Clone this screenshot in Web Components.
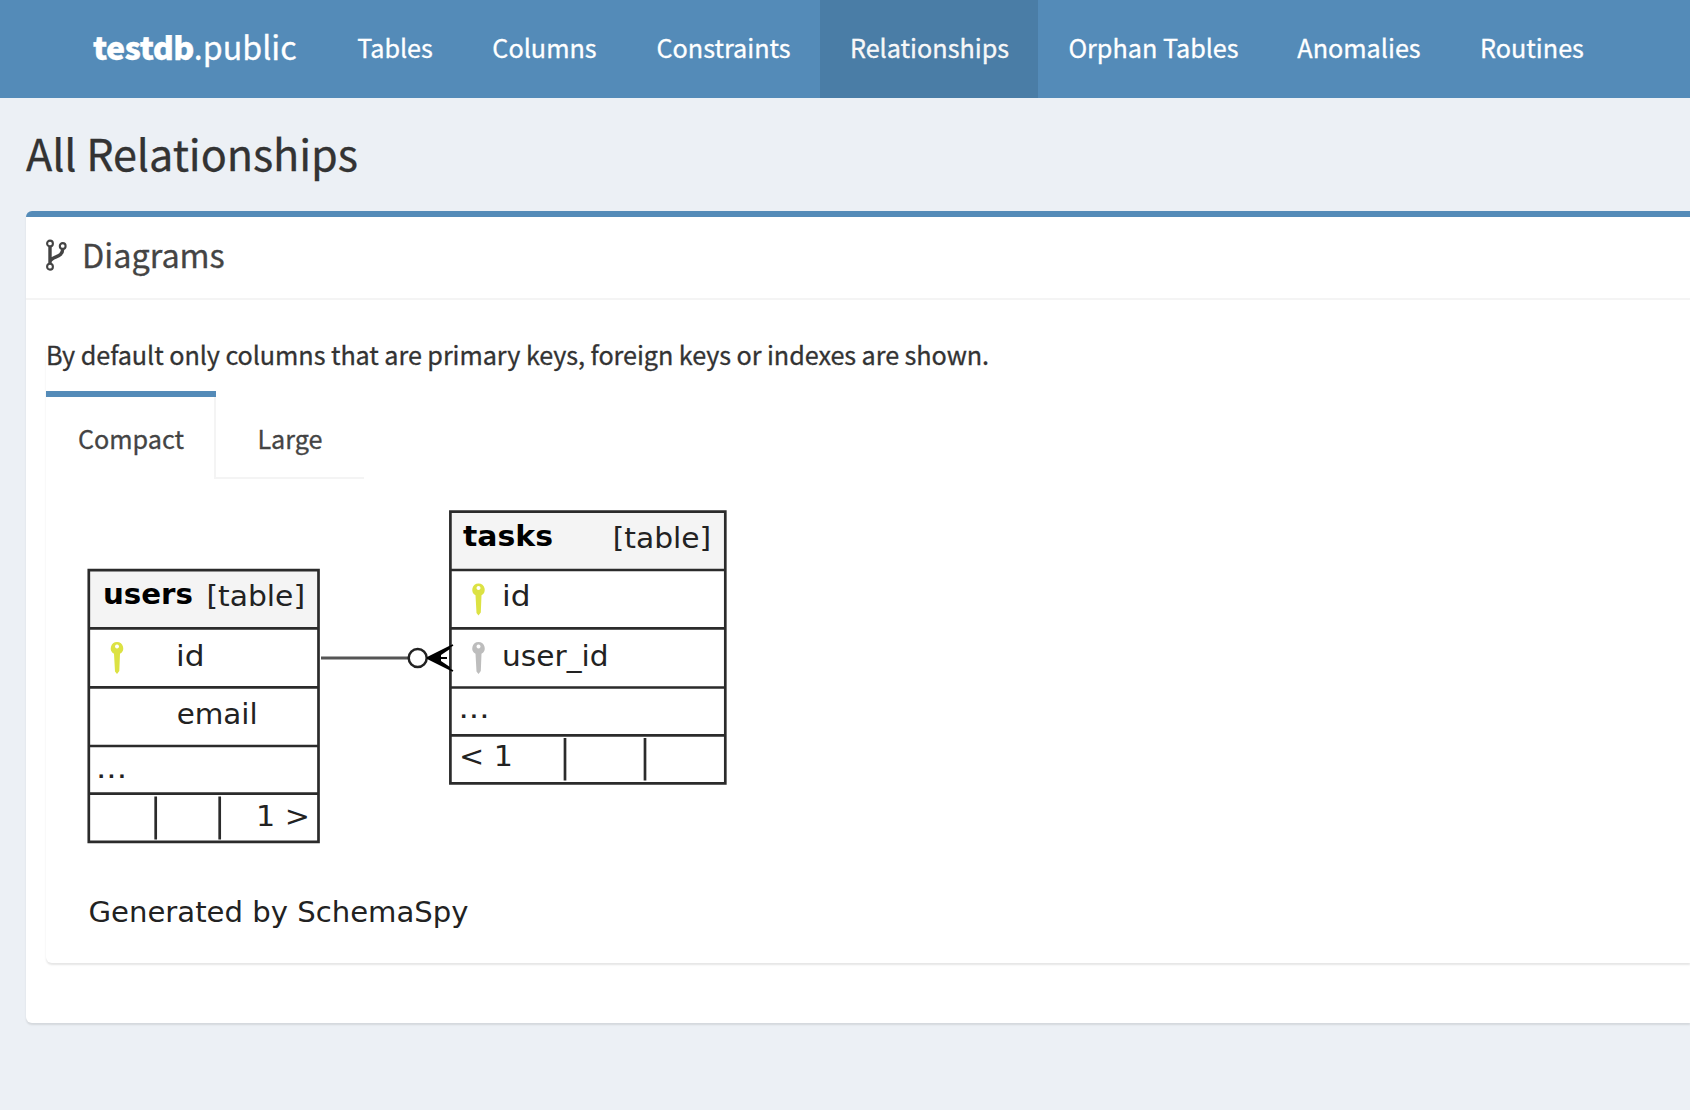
<!DOCTYPE html>
<html lang="en"><head><meta charset="utf-8"><title>testdb.public - All Relationships</title>
<style>
html,body{margin:0;height:100%;overflow:hidden}
body{background:#ecf0f5;color:#333;font-family:"Noto Sans CJK SC","Open Sans",sans-serif;-webkit-text-stroke:.3px currentColor}
</style></head><body>
<spy-app></spy-app>
<script>
const define=(name,html)=>customElements.define(name,class extends HTMLElement{
  constructor(){super();const t=document.createElement('template');t.innerHTML=html;
    this.attachShadow({mode:'open'}).appendChild(t.content.cloneNode(true));}
});

define('nav-item',`<style>
:host{display:flex;align-items:center;justify-content:center;height:98px;box-sizing:border-box;padding:0 0 4px 1px;font-size:25.2px;line-height:36px;white-space:nowrap;color:#fff;flex:none;-webkit-text-stroke:.3px #fff}
:host([active]){background:#4a7da6;color:#f6f6f6}
</style><slot></slot>`);

define('spy-navbar',`<style>
:host{display:flex;height:98px;background:#548bb8;overflow:hidden}
.brand{box-sizing:border-box;width:327px;padding-left:93px;font-size:32.2px;line-height:92px;color:#fff;white-space:nowrap;flex:none;-webkit-text-stroke:.3px #fff}
b{font-weight:900;letter-spacing:-.6px}
</style>
<div class="brand"><b>testdb</b><span>.public</span></div>
<nav-item style="width:135px">Tables</nav-item>
<nav-item style="width:164px">Columns</nav-item>
<nav-item style="width:194px">Constraints</nav-item>
<nav-item style="width:218px" active>Relationships</nav-item>
<nav-item style="width:230px">Orphan Tables</nav-item>
<nav-item style="width:181px">Anomalies</nav-item>
<nav-item style="width:165px">Routines</nav-item>`);

define('fork-icon',`<style>:host{display:block;width:22px;height:32px;margin-top:1px}svg{display:block}</style>
<svg width="22" height="32" viewBox="0 0 22 32" fill="none" stroke="#444">
<circle cx="4" cy="4.500" r="2.900" stroke-width="2.100"/><circle cx="16.700" cy="7" r="2.900" stroke-width="2.100"/><circle cx="4" cy="27.700" r="2.900" stroke-width="2.100"/>
<path d="M4 7.500V25M16.700 10C16.700 19 5.500 17 4 22.500" stroke-width="3.400"/></svg>`);

define('spy-box',`<style>
:host{display:block;box-sizing:border-box;height:812px;margin-left:26px;background:#fff;border-top:6px solid #548bb8;border-radius:6px 0 0 6px;box-shadow:0 2px 2px rgba(0,0,0,.1)}
header{display:flex;align-items:flex-start;box-sizing:border-box;height:83px;padding:21px 0 0 20px;border-bottom:2px solid #f4f4f4;color:#444;-webkit-text-stroke:.3px #444}
h3{margin:-6px 0 0 14px;font-weight:400;font-size:32.4px;line-height:44px}
.body{padding:42px 0 0 20px}
</style>
<header><fork-icon></fork-icon><h3><slot name="title"></slot></h3></header>
<div class="body"><slot></slot></div>`);

define('spy-tab',`<style>
:host{display:flex;flex-direction:column;box-sizing:border-box;height:88px;width:148px;text-align:center;font-size:25.2px;line-height:80px;color:#444;-webkit-text-stroke:.3px #444}
i{display:block;height:6px}
div{box-sizing:border-box;height:82px;padding-top:1px;border-bottom:2px solid #f4f4f4}
:host([active]){width:170px}
:host([active]) i{background:#548bb8}
:host([active]) div{border-bottom:0;border-right:2px solid #f4f4f4;height:82px;padding-left:2px}
</style><i></i><div><slot></slot></div>`);

define('spy-tabs',`<style>
:host{display:block;box-sizing:border-box;height:621px;border-radius:6px 0 0 6px;box-shadow:0 2px 2px rgba(0,0,0,.1);background:#fff}
p{margin:0;height:49px;font-size:25.2px;line-height:24px;letter-spacing:-.065px;white-space:nowrap}
.tabs{display:flex}
</style>
<p><slot name="note"></slot></p>
<div class="tabs"><spy-tab active>Compact</spy-tab><spy-tab>Large</spy-tab></div>
<slot></slot>`);

define('er-diagram',`<style>:host{display:block;-webkit-text-stroke:0}svg{display:block}text{font-family:"DejaVu Sans",sans-serif;font-size:28.600px;fill:#222}.b{font-weight:700;fill:#000}</style>
<svg width="720" height="470" viewBox="46 479 720 470">
<defs><g id="key"><path fill-rule="evenodd" d="M0 0a6.300 6.300 0 0 1 3 11.800L2.300 29 0 32l-2-2.500-1-17.700A6.300 6.300 0 0 1 0 0zM0 2.500a2 2 0 1 0 .01 0z"/></g></defs>
<path fill="#f4f4f4" d="M89 570.500h229v58h-229zM450.500 511.700h275v58.300h-275z"/>
<g fill="none" stroke="#2b2b2b" stroke-width="2.700">
<path d="M88.800 570.200H318.500V841.800H88.800zM88.800 628.400H318.500M88.800 687.300H318.500M88.800 746H318.500M88.800 793.700H318.500M155.700 796.500V839.500M219.700 796.500V839.500"/>
<path d="M450.400 511.700H725.300V783.400H450.400zM450.400 570H725.300M450.400 628.400H725.300M450.400 687.500H725.300M450.400 735.400H725.300M565 738V780.500M645 738V780.500"/></g>
<path d="M321 658H408" stroke="#555" stroke-width="3"/><circle cx="417.700" cy="658" r="9" fill="none" stroke="#222" stroke-width="2.500"/>
<path d="M427 658L453 645M427 658L453 671M427 658H447" stroke="#000" stroke-width="1.800"/><path d="M427 658L450 646.500V649L441 655V661L450 667V669.500z"/>
<use href="#key" x="117" y="642" fill="#dce243"/><use href="#key" x="478.500" y="583.500" fill="#dce243"/><use href="#key" x="478.500" y="642" fill="#bdbdbd"/>
<g lengthAdjust="spacingAndGlyphs">
<text class="b" x="102.900" y="603.700" textLength="90" lengthAdjust="spacingAndGlyphs">users</text><text x="206.500" y="605.700" textLength="98.500" lengthAdjust="spacingAndGlyphs">[table]</text>
<text x="176" y="666" textLength="28.500" lengthAdjust="spacingAndGlyphs">id</text><text x="176.700" y="723.700" textLength="81" lengthAdjust="spacingAndGlyphs">email</text><text x="96" y="778" textLength="31" lengthAdjust="spacingAndGlyphs">...</text><text x="256" y="826" textLength="54" lengthAdjust="spacingAndGlyphs">1 &gt;</text>
<text class="b" x="463" y="545.700" textLength="90" lengthAdjust="spacingAndGlyphs">tasks</text><text x="612.700" y="548.300" textLength="98.500" lengthAdjust="spacingAndGlyphs">[table]</text>
<text x="502" y="606" textLength="28.500" lengthAdjust="spacingAndGlyphs">id</text><text x="502" y="665.700" textLength="106.500" lengthAdjust="spacingAndGlyphs">user_id</text><text x="458.500" y="718" textLength="31" lengthAdjust="spacingAndGlyphs">...</text><text x="459" y="766" textLength="54" lengthAdjust="spacingAndGlyphs">&lt; 1</text>
<text x="88.500" y="921.700" textLength="380" lengthAdjust="spacingAndGlyphs">Generated by SchemaSpy</text></g>
</svg>`);

define('spy-app',`<style>
:host{display:block;height:1110px;overflow:hidden}
h1{margin:0;box-sizing:border-box;height:113px;padding:24px 0 0 26px;font-weight:400;font-size:43.200px;line-height:60px;letter-spacing:-.08px;color:#333}
</style>
<spy-navbar></spy-navbar>
<h1>All Relationships</h1>
<spy-box><span slot="title">Diagrams</span>
<spy-tabs><span slot="note">By default only columns that are primary keys, foreign keys or indexes are shown.</span>
<er-diagram></er-diagram></spy-tabs></spy-box>`);
</script></body></html>
